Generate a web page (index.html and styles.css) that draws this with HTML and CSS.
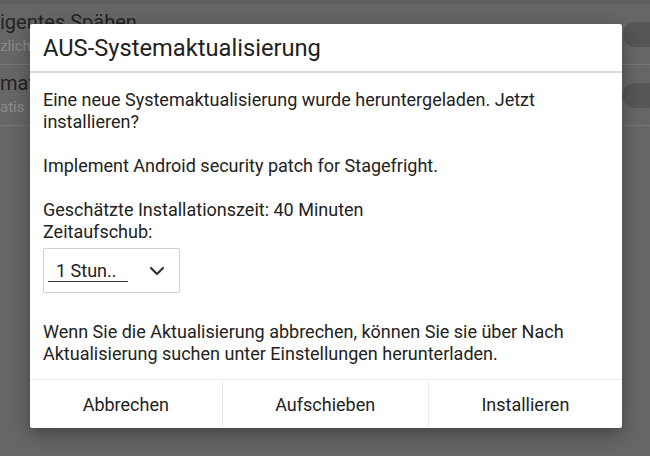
FILE: index.html
```html
<!DOCTYPE html>
<html lang="de">
<head>
<meta charset="utf-8">
<link rel="stylesheet" href="styles.css">
</head>
<body>
<div class="screen">
  <div class="statusbar"></div>
  <div class="settings">
    <div class="row">
      <div class="row-text">
        <div class="row-title">igentes Spähen</div>
        <div class="row-sub">zlich</div>
      </div>
      <div class="toggle"></div>
    </div>
    <div class="row">
      <div class="row-text">
        <div class="row-title">mat</div>
        <div class="row-sub">atis</div>
      </div>
      <div class="toggle"></div>
    </div>
  </div>

  <div class="dialog">
    <div class="dialog-title">AUS-Systemaktualisierung</div>
    <div class="dialog-body">
      <p class="para">Eine neue Systemaktualisierung wurde heruntergeladen. Jetzt installieren?</p>
      <p class="para">Implement Android security patch for Stagefright.</p>
      <p class="para tight">Geschätzte Installationszeit: 40 Minuten<br>Zeitaufschub:</p>
      <div class="select">
        <span class="select-value">1 Stun..</span>
        <svg class="chev" width="16" height="10" viewBox="0 0 16 10"><path d="M2 2 L8 8 L14 2" fill="none" stroke="#333" stroke-width="2.2" stroke-linecap="round" stroke-linejoin="round"/></svg>
      </div>
      <p class="para note">Wenn Sie die Aktualisierung abbrechen, können Sie sie über Nach Aktualisierung suchen unter Einstellungen herunterladen.</p>
    </div>
    <div class="dialog-buttons">
      <div class="btn">Abbrechen</div>
      <div class="btn">Aufschieben</div>
      <div class="btn">Installieren</div>
    </div>
  </div>
</div>
</body>
</html>
```

FILE: styles.css
```css
html, body {
  margin: 0;
  padding: 0;
}
body {
  width: 650px;
  height: 456px;
  overflow: hidden;
  background: #666666;
  font-family: Roboto, "Liberation Sans", sans-serif;
}
.screen {
  position: relative;
  width: 650px;
  height: 456px;
  overflow: hidden;
  background: #666666;
}
.statusbar {
  height: 4px;
  background: #5e5e5e;
}
.settings {
  display: flex;
  flex-direction: column;
}
.row {
  display: flex;
  align-items: center;
  justify-content: space-between;
  height: 60px;
  border-bottom: 1px solid #767676;
}
.row-text {
  display: flex;
  flex-direction: column;
  gap: 3px;
  margin-top: -4px;
}
.row-title {
  font-size: 20px;
  color: #222222;
  line-height: 24px;
  white-space: nowrap;
}
.row-sub {
  font-size: 15px;
  color: #8a8a8a;
  line-height: 18px;
  white-space: nowrap;
}
.toggle {
  width: 60px;
  height: 25px;
  border-radius: 12px;
  background: #565656;
  margin-right: -33px;
}
.dialog {
  position: absolute;
  left: 30px;
  top: 24px;
  width: 592px;
  height: 404px;
  background: #ffffff;
  border-radius: 2px;
  box-shadow: 0 6px 18px rgba(0,0,0,0.35);
  display: flex;
  flex-direction: column;
  color: #222222;
}
.dialog-title {
  height: 46px;
  border-bottom: 2px solid #dcdcdc;
  font-size: 23.7px;
  line-height: 46px;
  padding-left: 13px;
  padding-top: 1px;
  color: #212121;
}
.dialog-body {
  flex: 1;
  padding: 16px 13px 0 13px;
  font-size: 18px;
  line-height: 22px;
}
.para {
  margin: 0 0 22px 0;
  width: 550px;
}
.para.tight {
  margin-bottom: 5px;
}
.select {
  border: 1px solid #cfcfcf;
  border-radius: 2px;
  display: flex;
  align-items: center;
  justify-content: space-between;
  padding: 0 14px 0 4px;
  box-sizing: border-box;
  width: 137px;
  height: 45px;
}
.select-value {
  width: 80px;
  padding-left: 8px;
  box-sizing: border-box;
  border-bottom: 1px solid #333;
  line-height: 20px;
  margin-top: 2px;
}
.chev {
  display: block;
}
.para.note {
  margin-top: 28px;
  width: 566px;
  margin-bottom: 0;
}
.dialog-buttons {
  height: 48px;
  border-top: 1px solid #ececec;
  display: flex;
}
.btn {
  flex: 1 1 auto;
  display: flex;
  align-items: center;
  justify-content: center;
  font-size: 18px;
  color: #222222;
  border-left: 1px solid #ececec;
}
.btn:first-child {
  border-left: none;
}
```
